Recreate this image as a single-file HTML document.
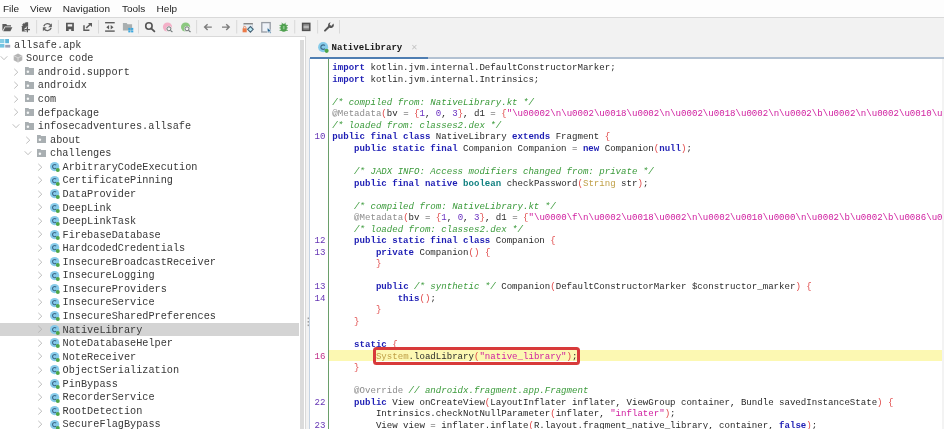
<!DOCTYPE html>
<html><head><meta charset="utf-8">
<style>
*{margin:0;padding:0;box-sizing:border-box}
html,body{width:944px;height:429px;overflow:hidden;background:#f2f2f2;position:relative}
.abs{position:absolute}
.layer{position:absolute;left:0;top:0;width:944px;height:429px;will-change:transform}
#menu{position:absolute;left:0;top:0;width:944px;height:18.2px;background:#fdfdfd;border-bottom:1px solid #d9d9d9;will-change:transform}
#menu span{position:absolute;top:0;font:10px/1 "Liberation Sans",sans-serif;color:#1e1e1e;white-space:pre;transform:scaleY(0.88);transform-origin:0 8.5px}

.sep{position:absolute;top:20px;width:1px;height:13px;background:#d2d2d2}
#tree{position:absolute;left:0;top:36.4px;width:305.8px;height:400px;background:#fff;border-top:1px solid #d9d9d9;border-right:1px solid #d9d9d9}
#vsb{position:absolute;left:300.1px;top:39.7px;width:3.8px;height:392px;background:#dbdbdb}
.tr{position:absolute;font-family:"Liberation Mono",monospace;font-size:10.233px;line-height:0;color:#383838;white-space:pre}
.sel{position:absolute;left:0;width:298.6px;height:13px;background:#d4d4d4}
.chev{position:absolute}
#editor{position:absolute;left:309.4px;top:57.5px;width:640px;height:380px;background:#fff;border-left:1px solid #c5d3e3;overflow:hidden}
.cl,.ln{position:absolute;font-family:"Liberation Mono",monospace;font-size:9.095px;line-height:0;white-space:pre;color:#2a2a2a}
.cl{left:332.3px}
.ln{right:618.5px;color:#6434b4}
.ln.cur{color:#c0308a}
.k{color:#1e1eb4;font-weight:bold}
.c{color:#3a9a3a;font-style:italic}
.a{color:#8c8c8c}
.s{color:#d020a0}
.p{color:#e04848}
.t{color:#108080;font-weight:bold}
.f{color:#c0a048}
.n{color:#6a30c0}
.o{color:#505050}
</style></head><body>
<div id="menu">
<span style="left:3px;top:4.2px">File</span>
<span style="left:30px;top:4.2px">View</span>
<span style="left:62.7px;top:4.2px">Navigation</span>
<span style="left:122px;top:4.2px">Tools</span>
<span style="left:156.6px;top:4.2px">Help</span>
</div>
<svg class="abs" style="left:0;top:0" width="944" height="38" viewBox="0 0 944 38">
<g fill="#d6d6d6">
<rect x="36.2" y="20" width="0.9" height="13.5"/>
<rect x="57.9" y="20" width="0.9" height="13.5"/>
<rect x="98.1" y="20" width="0.9" height="13.5"/>
<rect x="138.1" y="20" width="0.9" height="13.5"/>
<rect x="196.2" y="20" width="0.9" height="13.5"/>
<rect x="236.3" y="20" width="0.9" height="13.5"/>
<rect x="294.3" y="20" width="0.9" height="13.5"/>
<rect x="317.2" y="20" width="0.9" height="13.5"/>
<rect x="339.1" y="20" width="0.9" height="13.5"/>
</g>
<!-- open folder -->
<path d="M2.4 24 H6.2 L7.2 25.2 H11 V26.6 H4.8 L2.4 31 Z" fill="#5a5a5a"/>
<path d="M3.2 31.2 L5.2 27.2 H12.4 L10.4 31.2 Z" fill="#5a5a5a"/>
<!-- add file -->
<path d="M21.9 26.2 L25.7 22.2 H28.1 V31.6 H21.9 Z" fill="#5a5a5a"/>
<path d="M21.9 25.0 L24.3 22.5 V25.0 Z" fill="#5a5a5a"/>
<path d="M24.6 29.6 H30.0 M27.3 26.8 V32.4" stroke="#f0f0f0" stroke-width="3" fill="none"/>
<path d="M24.8 29.6 H29.9 M27.35 26.9 V32.3" stroke="#5a5a5a" stroke-width="1.3" fill="none"/>
<!-- sync -->
<path d="M50.9 25.6 A3.9 3.9 0 0 0 43.8 26.2" stroke="#646464" stroke-width="1.4" fill="none"/>
<path d="M44.0 28.6 A3.9 3.9 0 0 0 51.1 28.0" stroke="#646464" stroke-width="1.4" fill="none"/>
<path d="M51.9 23.2 V27.2 H48.2 Z" fill="#646464"/>
<path d="M42.9 31.2 V27.2 H46.6 Z" fill="#646464"/>
<!-- save -->
<path d="M66 22.8 H73.9 V31 H66 Z M67.7 24.3 V26.4 H72.2 V24.3 Z M68.7 29.2 V31 H71.2 V29.2 Z" fill="#585858" fill-rule="evenodd"/>
<!-- export -->
<path d="M84 25.2 V30.2 H89.4" stroke="#5c5c5c" stroke-width="1.5" fill="none"/>
<path d="M86.2 28 L91 23.6" stroke="#5c5c5c" stroke-width="1.5" fill="none"/>
<path d="M88 23 H92 V27 Z" fill="#5c5c5c"/>
<!-- expand -->
<rect x="105.1" y="22" width="9.6" height="1.4" fill="#5c5c5c"/>
<rect x="105.1" y="30.4" width="9.6" height="1.4" fill="#5c5c5c"/>
<path d="M109.1 24.9 V29.5 L106.3 27.2 Z M110.7 24.9 V29.5 L113.5 27.2 Z" fill="#5c5c5c"/>
<!-- folder grid -->
<path d="M122.9 23.1 H126.6 L127.6 24.2 H132.1 V30.4 H122.9 Z" fill="#a9afb0"/>
<g fill="#3aa8e0"><rect x="128.3" y="27.9" width="2.2" height="2"/><rect x="131.1" y="27.9" width="2.2" height="2"/><rect x="128.3" y="30.4" width="2.2" height="2"/><rect x="131.1" y="30.4" width="2.2" height="2"/></g>
<!-- search -->
<circle cx="148.9" cy="26" r="3.2" stroke="#555" stroke-width="1.6" fill="none"/>
<path d="M151.2 28.4 L154.4 31.4" stroke="#555" stroke-width="1.8" stroke-linecap="round"/>
<!-- pink -->
<circle cx="167.5" cy="27.0" r="4.6" fill="#f4b0c8"/>
<circle cx="169.0" cy="28.9" r="2.9" fill="#f2f2f2"/>
<circle cx="168.9" cy="28.8" r="2.0" stroke="#6e7676" stroke-width="1" fill="none"/>
<path d="M170.4 30.3 L172.4 32" stroke="#6e7676" stroke-width="1.1"/>
<!-- green -->
<circle cx="185.6" cy="27.0" r="4.6" fill="#8cc880"/>
<circle cx="187.1" cy="28.9" r="2.9" fill="#f2f2f2"/>
<circle cx="187.0" cy="28.8" r="2.0" stroke="#6e7676" stroke-width="1" fill="none"/>
<path d="M188.5 30.3 L190.5 32" stroke="#6e7676" stroke-width="1.1"/>
<!-- back/forward -->
<path d="M211.8 27.1 H205 M207.6 24.2 L204.6 27.1 L207.6 30" stroke="#7c7c7c" stroke-width="1.4" fill="none"/>
<path d="M222 27.1 H228.8 M226.2 24.2 L229.2 27.1 L226.2 30" stroke="#7c7c7c" stroke-width="1.4" fill="none"/>
<!-- lock gear -->
<rect x="243.8" y="24.3" width="8.8" height="4" fill="#e6eef4"/>
<rect x="243.5" y="24.3" width="0.7" height="5" fill="#c4cad4"/>
<rect x="252.2" y="24.3" width="0.7" height="2.5" fill="#c4cad4"/>
<rect x="243.5" y="23.1" width="9.4" height="1.3" fill="#7a7a7a"/>
<path d="M243.5 28.6 V27.6 A1.2 1.2 0 0 1 245.9 27.6 V28.6" stroke="#ee8a5c" stroke-width="0.9" fill="none"/>
<rect x="242.6" y="28.3" width="4.1" height="4" fill="#ec7a48"/>
<path d="M250.4 26.5 L253.2 29.3 L250.4 32.1 L247.6 29.3 Z" stroke="#4a6478" stroke-width="1.1" fill="#bfeef8"/>
<!-- doc cursor -->
<rect x="261.8" y="22.6" width="8.4" height="9.4" stroke="#979ca4" stroke-width="1.3" fill="#eef2f8"/>
<path d="M267.0 27.8 L271.4 30.6 L269.6 31.0 L271.2 32.8 L270.2 33.4 L268.8 31.6 L267.6 32.8 Z" stroke="#eef4f8" stroke-width="0.7" fill="#1f5f8f"/>
<!-- bug -->
<path d="M279.5 25.4 H287.9 M279.5 27.9 H287.9 M279.6 30.4 H287.8" stroke="#4fa04f" stroke-width="0.9"/>
<ellipse cx="283.7" cy="27.7" rx="3.2" ry="4" fill="#4fa04f"/>
<path d="M281.8 22.8 L282.8 24.3 M285.6 22.8 L284.6 24.3" stroke="#4fa04f" stroke-width="0.9"/>
<rect x="282.9" y="26" width="1.7" height="3.2" fill="#8cc88c"/>
<!-- dark square -->
<rect x="302.6" y="23.4" width="7.2" height="7" stroke="#505050" stroke-width="1.5" fill="#8c8c8c"/>
<rect x="303.6" y="25.8" width="5.2" height="2.2" fill="#b8b8b8"/>
<!-- wrench -->
<path d="M325 30.6 L329.4 26.2" stroke="#555" stroke-width="2" stroke-linecap="round"/>
<path d="M333.4 23.6 A2.9 2.9 0 1 1 330.6 22.3 L329.6 24.6 L331.2 26 Z" fill="#555"/>
</svg>

<div id="tree">
</div>
<div class="layer"><svg style="position:absolute;left:0;top:39.00px" width="11" height="9" viewBox="0 0 11 9"><rect x="0" y="0" width="4.4" height="4.2" fill="#86cee6"/><rect x="5.2" y="0" width="3.8" height="4.2" fill="#5fb6da"/><rect x="0" y="5" width="4.4" height="3.6" fill="#74c4e2"/><rect x="5.2" y="5.8" width="5" height="2.8" fill="#9ca0b6"/></svg><div class="tr" style="left:14.0px;top:44.80px">allsafe.apk</div><svg class="chev" style="left:-0.35px;top:54.06px" width="8" height="8" viewBox="0 0 8 8"><path d="M0.7 2.3 L4 5.7 L7.3 2.3" fill="none" stroke="#b2b2b2" stroke-width="0.85"/></svg><svg style="position:absolute;left:12.8px;top:52.96px" width="10" height="10" viewBox="0 0 10 10"><path d="M5 0.5 L9.3 2.7 L9.3 7.3 L5 9.5 L0.7 7.3 L0.7 2.7 Z" fill="#b4b4b4"/><path d="M0.7 2.7 L5 4.9 L9.3 2.7 M5 4.9 L5 9.5" fill="none" stroke="#e6e6e6" stroke-width="0.7"/></svg><div class="tr" style="left:26.0px;top:58.36px">Source code</div><svg class="chev" style="left:11.50px;top:67.72px" width="8" height="8" viewBox="0 0 8 8"><path d="M2.3 0.9 L5.8 4.2 L2.3 7.5" fill="none" stroke="#b2b2b2" stroke-width="0.85"/></svg><svg style="position:absolute;left:24.80px;top:67.32px" width="10" height="8" viewBox="0 0 10 8"><path d="M0 0 H3.4 L4.2 1 H9 V7.9 H0 Z" fill="#a9afb2"/><circle cx="2.9" cy="4.7" r="1.25" fill="#f6f8f8"/></svg><div class="tr" style="left:37.8px;top:71.92px">android.support</div><svg class="chev" style="left:11.50px;top:81.28px" width="8" height="8" viewBox="0 0 8 8"><path d="M2.3 0.9 L5.8 4.2 L2.3 7.5" fill="none" stroke="#b2b2b2" stroke-width="0.85"/></svg><svg style="position:absolute;left:24.80px;top:80.88px" width="10" height="8" viewBox="0 0 10 8"><path d="M0 0 H3.4 L4.2 1 H9 V7.9 H0 Z" fill="#a9afb2"/><circle cx="2.9" cy="4.7" r="1.25" fill="#f6f8f8"/></svg><div class="tr" style="left:37.8px;top:85.48px">androidx</div><svg class="chev" style="left:11.50px;top:94.84px" width="8" height="8" viewBox="0 0 8 8"><path d="M2.3 0.9 L5.8 4.2 L2.3 7.5" fill="none" stroke="#b2b2b2" stroke-width="0.85"/></svg><svg style="position:absolute;left:24.80px;top:94.44px" width="10" height="8" viewBox="0 0 10 8"><path d="M0 0 H3.4 L4.2 1 H9 V7.9 H0 Z" fill="#a9afb2"/><circle cx="2.9" cy="4.7" r="1.25" fill="#f6f8f8"/></svg><div class="tr" style="left:37.8px;top:99.04px">com</div><svg class="chev" style="left:11.50px;top:108.40px" width="8" height="8" viewBox="0 0 8 8"><path d="M2.3 0.9 L5.8 4.2 L2.3 7.5" fill="none" stroke="#b2b2b2" stroke-width="0.85"/></svg><svg style="position:absolute;left:24.80px;top:108.00px" width="10" height="8" viewBox="0 0 10 8"><path d="M0 0 H3.4 L4.2 1 H9 V7.9 H0 Z" fill="#a9afb2"/><circle cx="2.9" cy="4.7" r="1.25" fill="#f6f8f8"/></svg><div class="tr" style="left:37.8px;top:112.60px">defpackage</div><svg class="chev" style="left:11.50px;top:121.86px" width="8" height="8" viewBox="0 0 8 8"><path d="M0.7 2.3 L4 5.7 L7.3 2.3" fill="none" stroke="#b2b2b2" stroke-width="0.85"/></svg><svg style="position:absolute;left:24.80px;top:121.56px" width="10" height="8" viewBox="0 0 10 8"><path d="M0 0 H3.4 L4.2 1 H9 V7.9 H0 Z" fill="#a9afb2"/><circle cx="2.9" cy="4.7" r="1.25" fill="#f6f8f8"/></svg><div class="tr" style="left:37.8px;top:126.16px">infosecadventures.allsafe</div><svg class="chev" style="left:23.65px;top:135.52px" width="8" height="8" viewBox="0 0 8 8"><path d="M2.3 0.9 L5.8 4.2 L2.3 7.5" fill="none" stroke="#b2b2b2" stroke-width="0.85"/></svg><svg style="position:absolute;left:37.10px;top:135.12px" width="10" height="8" viewBox="0 0 10 8"><path d="M0 0 H3.4 L4.2 1 H9 V7.9 H0 Z" fill="#a9afb2"/><circle cx="2.9" cy="4.7" r="1.25" fill="#f6f8f8"/></svg><div class="tr" style="left:50.1px;top:139.72px">about</div><svg class="chev" style="left:23.65px;top:148.98px" width="8" height="8" viewBox="0 0 8 8"><path d="M0.7 2.3 L4 5.7 L7.3 2.3" fill="none" stroke="#b2b2b2" stroke-width="0.85"/></svg><svg style="position:absolute;left:37.10px;top:148.68px" width="10" height="8" viewBox="0 0 10 8"><path d="M0 0 H3.4 L4.2 1 H9 V7.9 H0 Z" fill="#a9afb2"/><circle cx="2.9" cy="4.7" r="1.25" fill="#f6f8f8"/></svg><div class="tr" style="left:50.1px;top:153.28px">challenges</div><svg class="chev" style="left:35.80px;top:162.64px" width="8" height="8" viewBox="0 0 8 8"><path d="M2.3 0.9 L5.8 4.2 L2.3 7.5" fill="none" stroke="#b2b2b2" stroke-width="0.85"/></svg><svg style="position:absolute;left:49.60px;top:162.04px" width="11" height="11" viewBox="0 0 11 11"><circle cx="4.6" cy="4.6" r="4.6" fill="#86cbea"/><path d="M6.2 3.2 A2.1 2.1 0 1 0 6.2 6.0" fill="none" stroke="#3d6a8a" stroke-width="1.1"/><circle cx="7.8" cy="8.0" r="2.0" fill="#4ea64a"/></svg><div class="tr" style="left:62.6px;top:166.84px">ArbitraryCodeExecution</div><svg class="chev" style="left:35.80px;top:176.20px" width="8" height="8" viewBox="0 0 8 8"><path d="M2.3 0.9 L5.8 4.2 L2.3 7.5" fill="none" stroke="#b2b2b2" stroke-width="0.85"/></svg><svg style="position:absolute;left:49.60px;top:175.60px" width="11" height="11" viewBox="0 0 11 11"><circle cx="4.6" cy="4.6" r="4.6" fill="#86cbea"/><path d="M6.2 3.2 A2.1 2.1 0 1 0 6.2 6.0" fill="none" stroke="#3d6a8a" stroke-width="1.1"/><circle cx="7.8" cy="8.0" r="2.0" fill="#4ea64a"/></svg><div class="tr" style="left:62.6px;top:180.40px">CertificatePinning</div><svg class="chev" style="left:35.80px;top:189.76px" width="8" height="8" viewBox="0 0 8 8"><path d="M2.3 0.9 L5.8 4.2 L2.3 7.5" fill="none" stroke="#b2b2b2" stroke-width="0.85"/></svg><svg style="position:absolute;left:49.60px;top:189.16px" width="11" height="11" viewBox="0 0 11 11"><circle cx="4.6" cy="4.6" r="4.6" fill="#86cbea"/><path d="M6.2 3.2 A2.1 2.1 0 1 0 6.2 6.0" fill="none" stroke="#3d6a8a" stroke-width="1.1"/><circle cx="7.8" cy="8.0" r="2.0" fill="#4ea64a"/></svg><div class="tr" style="left:62.6px;top:193.96px">DataProvider</div><svg class="chev" style="left:35.80px;top:203.32px" width="8" height="8" viewBox="0 0 8 8"><path d="M2.3 0.9 L5.8 4.2 L2.3 7.5" fill="none" stroke="#b2b2b2" stroke-width="0.85"/></svg><svg style="position:absolute;left:49.60px;top:202.72px" width="11" height="11" viewBox="0 0 11 11"><circle cx="4.6" cy="4.6" r="4.6" fill="#86cbea"/><path d="M6.2 3.2 A2.1 2.1 0 1 0 6.2 6.0" fill="none" stroke="#3d6a8a" stroke-width="1.1"/><circle cx="7.8" cy="8.0" r="2.0" fill="#4ea64a"/></svg><div class="tr" style="left:62.6px;top:207.52px">DeepLink</div><svg class="chev" style="left:35.80px;top:216.88px" width="8" height="8" viewBox="0 0 8 8"><path d="M2.3 0.9 L5.8 4.2 L2.3 7.5" fill="none" stroke="#b2b2b2" stroke-width="0.85"/></svg><svg style="position:absolute;left:49.60px;top:216.28px" width="11" height="11" viewBox="0 0 11 11"><circle cx="4.6" cy="4.6" r="4.6" fill="#86cbea"/><path d="M6.2 3.2 A2.1 2.1 0 1 0 6.2 6.0" fill="none" stroke="#3d6a8a" stroke-width="1.1"/><circle cx="7.8" cy="8.0" r="2.0" fill="#4ea64a"/></svg><div class="tr" style="left:62.6px;top:221.08px">DeepLinkTask</div><svg class="chev" style="left:35.80px;top:230.44px" width="8" height="8" viewBox="0 0 8 8"><path d="M2.3 0.9 L5.8 4.2 L2.3 7.5" fill="none" stroke="#b2b2b2" stroke-width="0.85"/></svg><svg style="position:absolute;left:49.60px;top:229.84px" width="11" height="11" viewBox="0 0 11 11"><circle cx="4.6" cy="4.6" r="4.6" fill="#86cbea"/><path d="M6.2 3.2 A2.1 2.1 0 1 0 6.2 6.0" fill="none" stroke="#3d6a8a" stroke-width="1.1"/><circle cx="7.8" cy="8.0" r="2.0" fill="#4ea64a"/></svg><div class="tr" style="left:62.6px;top:234.64px">FirebaseDatabase</div><svg class="chev" style="left:35.80px;top:244.00px" width="8" height="8" viewBox="0 0 8 8"><path d="M2.3 0.9 L5.8 4.2 L2.3 7.5" fill="none" stroke="#b2b2b2" stroke-width="0.85"/></svg><svg style="position:absolute;left:49.60px;top:243.40px" width="11" height="11" viewBox="0 0 11 11"><circle cx="4.6" cy="4.6" r="4.6" fill="#86cbea"/><path d="M6.2 3.2 A2.1 2.1 0 1 0 6.2 6.0" fill="none" stroke="#3d6a8a" stroke-width="1.1"/><circle cx="7.8" cy="8.0" r="2.0" fill="#4ea64a"/></svg><div class="tr" style="left:62.6px;top:248.20px">HardcodedCredentials</div><svg class="chev" style="left:35.80px;top:257.56px" width="8" height="8" viewBox="0 0 8 8"><path d="M2.3 0.9 L5.8 4.2 L2.3 7.5" fill="none" stroke="#b2b2b2" stroke-width="0.85"/></svg><svg style="position:absolute;left:49.60px;top:256.96px" width="11" height="11" viewBox="0 0 11 11"><circle cx="4.6" cy="4.6" r="4.6" fill="#86cbea"/><path d="M6.2 3.2 A2.1 2.1 0 1 0 6.2 6.0" fill="none" stroke="#3d6a8a" stroke-width="1.1"/><circle cx="7.8" cy="8.0" r="2.0" fill="#4ea64a"/></svg><div class="tr" style="left:62.6px;top:261.76px">InsecureBroadcastReceiver</div><svg class="chev" style="left:35.80px;top:271.12px" width="8" height="8" viewBox="0 0 8 8"><path d="M2.3 0.9 L5.8 4.2 L2.3 7.5" fill="none" stroke="#b2b2b2" stroke-width="0.85"/></svg><svg style="position:absolute;left:49.60px;top:270.52px" width="11" height="11" viewBox="0 0 11 11"><circle cx="4.6" cy="4.6" r="4.6" fill="#86cbea"/><path d="M6.2 3.2 A2.1 2.1 0 1 0 6.2 6.0" fill="none" stroke="#3d6a8a" stroke-width="1.1"/><circle cx="7.8" cy="8.0" r="2.0" fill="#4ea64a"/></svg><div class="tr" style="left:62.6px;top:275.32px">InsecureLogging</div><svg class="chev" style="left:35.80px;top:284.68px" width="8" height="8" viewBox="0 0 8 8"><path d="M2.3 0.9 L5.8 4.2 L2.3 7.5" fill="none" stroke="#b2b2b2" stroke-width="0.85"/></svg><svg style="position:absolute;left:49.60px;top:284.08px" width="11" height="11" viewBox="0 0 11 11"><circle cx="4.6" cy="4.6" r="4.6" fill="#86cbea"/><path d="M6.2 3.2 A2.1 2.1 0 1 0 6.2 6.0" fill="none" stroke="#3d6a8a" stroke-width="1.1"/><circle cx="7.8" cy="8.0" r="2.0" fill="#4ea64a"/></svg><div class="tr" style="left:62.6px;top:288.88px">InsecureProviders</div><svg class="chev" style="left:35.80px;top:298.24px" width="8" height="8" viewBox="0 0 8 8"><path d="M2.3 0.9 L5.8 4.2 L2.3 7.5" fill="none" stroke="#b2b2b2" stroke-width="0.85"/></svg><svg style="position:absolute;left:49.60px;top:297.64px" width="11" height="11" viewBox="0 0 11 11"><circle cx="4.6" cy="4.6" r="4.6" fill="#86cbea"/><path d="M6.2 3.2 A2.1 2.1 0 1 0 6.2 6.0" fill="none" stroke="#3d6a8a" stroke-width="1.1"/><circle cx="7.8" cy="8.0" r="2.0" fill="#4ea64a"/></svg><div class="tr" style="left:62.6px;top:302.44px">InsecureService</div><svg class="chev" style="left:35.80px;top:311.80px" width="8" height="8" viewBox="0 0 8 8"><path d="M2.3 0.9 L5.8 4.2 L2.3 7.5" fill="none" stroke="#b2b2b2" stroke-width="0.85"/></svg><svg style="position:absolute;left:49.60px;top:311.20px" width="11" height="11" viewBox="0 0 11 11"><circle cx="4.6" cy="4.6" r="4.6" fill="#86cbea"/><path d="M6.2 3.2 A2.1 2.1 0 1 0 6.2 6.0" fill="none" stroke="#3d6a8a" stroke-width="1.1"/><circle cx="7.8" cy="8.0" r="2.0" fill="#4ea64a"/></svg><div class="tr" style="left:62.6px;top:316.00px">InsecureSharedPreferences</div><div class="sel" style="top:322.86px"></div><svg class="chev" style="left:35.80px;top:325.36px" width="8" height="8" viewBox="0 0 8 8"><path d="M2.3 0.9 L5.8 4.2 L2.3 7.5" fill="none" stroke="#b2b2b2" stroke-width="0.85"/></svg><svg style="position:absolute;left:49.60px;top:324.76px" width="11" height="11" viewBox="0 0 11 11"><circle cx="4.6" cy="4.6" r="4.6" fill="#86cbea"/><path d="M6.2 3.2 A2.1 2.1 0 1 0 6.2 6.0" fill="none" stroke="#3d6a8a" stroke-width="1.1"/><circle cx="7.8" cy="8.0" r="2.0" fill="#4ea64a"/></svg><div class="tr" style="left:62.6px;top:329.56px">NativeLibrary</div><svg class="chev" style="left:35.80px;top:338.92px" width="8" height="8" viewBox="0 0 8 8"><path d="M2.3 0.9 L5.8 4.2 L2.3 7.5" fill="none" stroke="#b2b2b2" stroke-width="0.85"/></svg><svg style="position:absolute;left:49.60px;top:338.32px" width="11" height="11" viewBox="0 0 11 11"><circle cx="4.6" cy="4.6" r="4.6" fill="#86cbea"/><path d="M6.2 3.2 A2.1 2.1 0 1 0 6.2 6.0" fill="none" stroke="#3d6a8a" stroke-width="1.1"/><circle cx="7.8" cy="8.0" r="2.0" fill="#4ea64a"/></svg><div class="tr" style="left:62.6px;top:343.12px">NoteDatabaseHelper</div><svg class="chev" style="left:35.80px;top:352.48px" width="8" height="8" viewBox="0 0 8 8"><path d="M2.3 0.9 L5.8 4.2 L2.3 7.5" fill="none" stroke="#b2b2b2" stroke-width="0.85"/></svg><svg style="position:absolute;left:49.60px;top:351.88px" width="11" height="11" viewBox="0 0 11 11"><circle cx="4.6" cy="4.6" r="4.6" fill="#86cbea"/><path d="M6.2 3.2 A2.1 2.1 0 1 0 6.2 6.0" fill="none" stroke="#3d6a8a" stroke-width="1.1"/><circle cx="7.8" cy="8.0" r="2.0" fill="#4ea64a"/></svg><div class="tr" style="left:62.6px;top:356.68px">NoteReceiver</div><svg class="chev" style="left:35.80px;top:366.04px" width="8" height="8" viewBox="0 0 8 8"><path d="M2.3 0.9 L5.8 4.2 L2.3 7.5" fill="none" stroke="#b2b2b2" stroke-width="0.85"/></svg><svg style="position:absolute;left:49.60px;top:365.44px" width="11" height="11" viewBox="0 0 11 11"><circle cx="4.6" cy="4.6" r="4.6" fill="#86cbea"/><path d="M6.2 3.2 A2.1 2.1 0 1 0 6.2 6.0" fill="none" stroke="#3d6a8a" stroke-width="1.1"/><circle cx="7.8" cy="8.0" r="2.0" fill="#4ea64a"/></svg><div class="tr" style="left:62.6px;top:370.24px">ObjectSerialization</div><svg class="chev" style="left:35.80px;top:379.60px" width="8" height="8" viewBox="0 0 8 8"><path d="M2.3 0.9 L5.8 4.2 L2.3 7.5" fill="none" stroke="#b2b2b2" stroke-width="0.85"/></svg><svg style="position:absolute;left:49.60px;top:379.00px" width="11" height="11" viewBox="0 0 11 11"><circle cx="4.6" cy="4.6" r="4.6" fill="#86cbea"/><path d="M6.2 3.2 A2.1 2.1 0 1 0 6.2 6.0" fill="none" stroke="#3d6a8a" stroke-width="1.1"/><circle cx="7.8" cy="8.0" r="2.0" fill="#4ea64a"/></svg><div class="tr" style="left:62.6px;top:383.80px">PinBypass</div><svg class="chev" style="left:35.80px;top:393.16px" width="8" height="8" viewBox="0 0 8 8"><path d="M2.3 0.9 L5.8 4.2 L2.3 7.5" fill="none" stroke="#b2b2b2" stroke-width="0.85"/></svg><svg style="position:absolute;left:49.60px;top:392.56px" width="11" height="11" viewBox="0 0 11 11"><circle cx="4.6" cy="4.6" r="4.6" fill="#86cbea"/><path d="M6.2 3.2 A2.1 2.1 0 1 0 6.2 6.0" fill="none" stroke="#3d6a8a" stroke-width="1.1"/><circle cx="7.8" cy="8.0" r="2.0" fill="#4ea64a"/></svg><div class="tr" style="left:62.6px;top:397.36px">RecorderService</div><svg class="chev" style="left:35.80px;top:406.72px" width="8" height="8" viewBox="0 0 8 8"><path d="M2.3 0.9 L5.8 4.2 L2.3 7.5" fill="none" stroke="#b2b2b2" stroke-width="0.85"/></svg><svg style="position:absolute;left:49.60px;top:406.12px" width="11" height="11" viewBox="0 0 11 11"><circle cx="4.6" cy="4.6" r="4.6" fill="#86cbea"/><path d="M6.2 3.2 A2.1 2.1 0 1 0 6.2 6.0" fill="none" stroke="#3d6a8a" stroke-width="1.1"/><circle cx="7.8" cy="8.0" r="2.0" fill="#4ea64a"/></svg><div class="tr" style="left:62.6px;top:410.92px">RootDetection</div><svg class="chev" style="left:35.80px;top:420.28px" width="8" height="8" viewBox="0 0 8 8"><path d="M2.3 0.9 L5.8 4.2 L2.3 7.5" fill="none" stroke="#b2b2b2" stroke-width="0.85"/></svg><svg style="position:absolute;left:49.60px;top:419.68px" width="11" height="11" viewBox="0 0 11 11"><circle cx="4.6" cy="4.6" r="4.6" fill="#86cbea"/><path d="M6.2 3.2 A2.1 2.1 0 1 0 6.2 6.0" fill="none" stroke="#3d6a8a" stroke-width="1.1"/><circle cx="7.8" cy="8.0" r="2.0" fill="#4ea64a"/></svg><div class="tr" style="left:62.6px;top:424.48px">SecureFlagBypass</div></div>
<div id="vsb"></div>
<svg class="abs" style="left:306.5px;top:317px" width="3" height="10"><rect x="0.6" y="0.5" width="1.6" height="1.6" fill="#a0a0a0"/><rect x="0.6" y="4" width="1.6" height="1.6" fill="#a0a0a0"/><rect x="0.6" y="7.5" width="1.6" height="1.6" fill="#a0a0a0"/></svg>
<div id="editor"></div>
<div class="abs" style="left:309.5px;top:57.3px;width:635px;height:1.8px;background:#b2c1d2"></div>
<div class="abs" style="left:309.5px;top:57.2px;width:118.5px;height:1.9px;background:#4f7eb2"></div>
<div class="abs" style="left:328px;top:59px;width:1.3px;height:370px;background:#6a9e6a"></div>
<div class="abs" style="left:329.3px;top:350.15px;width:613px;height:11.3px;background:#fcf8b2"></div>
<div class="layer"><div class="ln" style="top:137.48px">10</div><div class="ln" style="top:241.25px">12</div><div class="ln" style="top:252.78px">13</div><div class="ln" style="top:287.37px">13</div><div class="ln" style="top:298.90px">14</div><div class="ln cur" style="top:356.55px">16</div><div class="ln" style="top:402.67px">22</div><div class="ln" style="top:425.73px">23</div><div class="cl" style="top:68.30px"><span class="k">import</span> kotlin.jvm.internal.DefaultConstructorMarker;</div><div class="cl" style="top:79.83px"><span class="k">import</span> kotlin.jvm.internal.Intrinsics;</div><div class="cl" style="top:91.36px"></div><div class="cl" style="top:102.89px"><span class="c">/* compiled from: NativeLibrary.kt */</span></div><div class="cl" style="top:114.42px"><span class="a">@Metadata</span><span class="p">(</span>bv <span class="o">=</span> <span class="p">{</span><span class="n">1</span>, <span class="n">0</span>, <span class="n">3</span><span class="p">}</span>, d1 <span class="o">=</span> <span class="p">{</span><span class="s">"\u00002\n\u0002\u0018\u0002\n\u0002\u0018\u0002\n\u0002\b\u0002\n\u0002\u0010\u0000\n\u0002\b\u0002</span></div><div class="cl" style="top:125.95px"><span class="c">/* loaded from: classes2.dex */</span></div><div class="cl" style="top:137.48px"><span class="k">public final class</span> NativeLibrary <span class="k">extends</span> Fragment <span class="p">{</span></div><div class="cl" style="top:149.01px">    <span class="k">public static final</span> Companion Companion <span class="o">=</span> <span class="k">new</span> Companion<span class="p">(</span><span class="k">null</span><span class="p">)</span>;</div><div class="cl" style="top:160.54px"></div><div class="cl" style="top:172.07px">    <span class="c">/* JADX INFO: Access modifiers changed from: private */</span></div><div class="cl" style="top:183.60px">    <span class="k">public final native</span> <span class="t">boolean</span> checkPassword<span class="p">(</span><span class="f">String</span> str<span class="p">)</span>;</div><div class="cl" style="top:195.13px"></div><div class="cl" style="top:206.66px">    <span class="c">/* compiled from: NativeLibrary.kt */</span></div><div class="cl" style="top:218.19px">    <span class="a">@Metadata</span><span class="p">(</span>bv <span class="o">=</span> <span class="p">{</span><span class="n">1</span>, <span class="n">0</span>, <span class="n">3</span><span class="p">}</span>, d1 <span class="o">=</span> <span class="p">{</span><span class="s">"\u0000\f\n\u0002\u0018\u0002\n\u0002\u0010\u0000\n\u0002\b\u0002\b\u0086\u0018\u0000</span></div><div class="cl" style="top:229.72px">    <span class="c">/* loaded from: classes2.dex */</span></div><div class="cl" style="top:241.25px">    <span class="k">public static final class</span> Companion <span class="p">{</span></div><div class="cl" style="top:252.78px">        <span class="k">private</span> Companion<span class="p">()</span> <span class="p">{</span></div><div class="cl" style="top:264.31px">        <span class="p">}</span></div><div class="cl" style="top:275.84px"></div><div class="cl" style="top:287.37px">        <span class="k">public</span> <span class="c">/* synthetic */</span> Companion<span class="p">(</span>DefaultConstructorMarker $constructor_marker<span class="p">)</span> <span class="p">{</span></div><div class="cl" style="top:298.90px">            <span class="k">this</span><span class="p">()</span>;</div><div class="cl" style="top:310.43px">        <span class="p">}</span></div><div class="cl" style="top:321.96px">    <span class="p">}</span></div><div class="cl" style="top:333.49px"></div><div class="cl" style="top:345.02px">    <span class="k">static</span> <span class="p">{</span></div><div class="cl" style="top:356.55px">        <span class="f">System</span>.loadLibrary<span class="p">(</span><span class="s">"native_library"</span><span class="p">)</span>;</div><div class="cl" style="top:368.08px">    <span class="p">}</span></div><div class="cl" style="top:379.61px"></div><div class="cl" style="top:391.14px">    <span class="a">@Override</span> <span class="c">// androidx.fragment.app.Fragment</span></div><div class="cl" style="top:402.67px">    <span class="k">public</span> View onCreateView<span class="p">(</span>LayoutInflater inflater, ViewGroup container, Bundle savedInstanceState<span class="p">)</span> <span class="p">{</span></div><div class="cl" style="top:414.20px">        Intrinsics.checkNotNullParameter<span class="p">(</span>inflater, <span class="s">"inflater"</span><span class="p">)</span>;</div><div class="cl" style="top:425.73px">        View view <span class="o">=</span> inflater.inflate<span class="p">(</span>R.layout.fragment_native_library, container, <span class="k">false</span><span class="p">)</span>;</div></div>
<div class="abs" style="left:942.3px;top:59px;width:2px;height:370px;background:#f3f3f3"></div>
<div class="abs" style="left:372.5px;top:346.8px;width:207.2px;height:18.6px;border:3px solid #d83a3a;border-radius:3.5px"></div>
<svg class="abs" style="left:317.9px;top:41.5px" width="12" height="12" viewBox="0 0 11 11"><circle cx="4.7" cy="4.7" r="4.6" fill="#86cbea"/><path d="M6.3 3.3 A2.1 2.1 0 1 0 6.3 6.1" fill="none" stroke="#3d6a8a" stroke-width="1.1"/><circle cx="7.9" cy="8.1" r="1.9" fill="#4ea64a"/></svg>
<div class="tr" style="left:331.5px;top:48.0px;font-size:9.095px;font-weight:bold;color:#1a1a1a">NativeLibrary</div>
<div class="abs" style="left:411.3px;top:43.5px;font:8px/1 'Liberation Sans',sans-serif;color:#c4c4c4">&#x2715;</div>
</body></html>
